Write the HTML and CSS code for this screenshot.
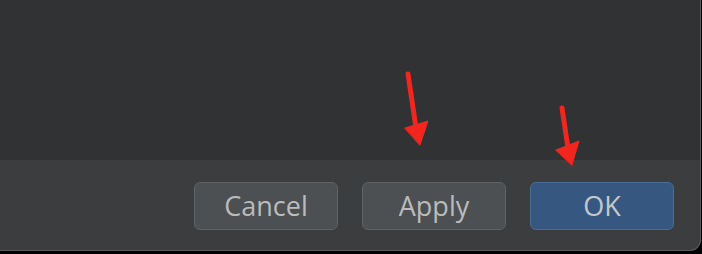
FILE: index.html
```html
<!DOCTYPE html>
<html>
<head>
<meta charset="utf-8">
<link rel="stylesheet" href="styles.css">
</head>
<body>
<div class="window">
  <div class="content"></div>
  <div class="footer">
    <button class="btn">Cancel</button>
    <button class="btn">Apply</button>
    <button class="btn btn-primary">OK</button>
  </div>
  <svg class="annotations" width="702" height="254" viewBox="0 0 702 254">
    <g fill="#f0261f" stroke="#f0261f" stroke-linecap="round" stroke-linejoin="round">
      <line x1="408" y1="74" x2="416" y2="128" stroke-width="5"/>
      <polygon points="405,128 428,121 420,145" stroke-width="1"/>
      <line x1="562" y1="108" x2="568" y2="148" stroke-width="5"/>
      <polygon points="556,150 579,141 572,165" stroke-width="1"/>
    </g>
  </svg>
</div>
</body>
</html>
```

FILE: styles.css
```css
* { box-sizing: border-box; }
html, body {
  margin: 0;
  padding: 0;
  background: #000;
  width: 702px;
  height: 254px;
  overflow: hidden;
}
.window {
  position: relative;
  width: 701px;
  height: 251px;
  background: #3c3d3f;
  border-right: 1px solid #5a5b5d;
  border-bottom: 1px solid #5a5b5d;
  border-bottom-right-radius: 11px;
  overflow: hidden;
  display: flex;
  flex-direction: column;
}
.content {
  height: 160px;
  background: #313234;
}
.footer {
  flex: 1;
  display: flex;
  justify-content: flex-end;
  align-items: flex-start;
  gap: 24px;
  padding: 22px 26px 0 0;
}
.btn {
  width: 144px;
  height: 48px;
  background: #4c5052;
  border: 1px solid #5e6265;
  border-radius: 6px;
  color: #bbbbbb;
  font-family: "Open Sans", "Liberation Sans", sans-serif;
  font-size: 27px;
  padding: 0;
  line-height: 44px;
}
.btn-primary {
  background: #365880;
  border-color: #4a6d95;
  color: #c3c8ce;
}
.annotations {
  position: absolute;
  left: 0;
  top: 0;
  pointer-events: none;
}
```
